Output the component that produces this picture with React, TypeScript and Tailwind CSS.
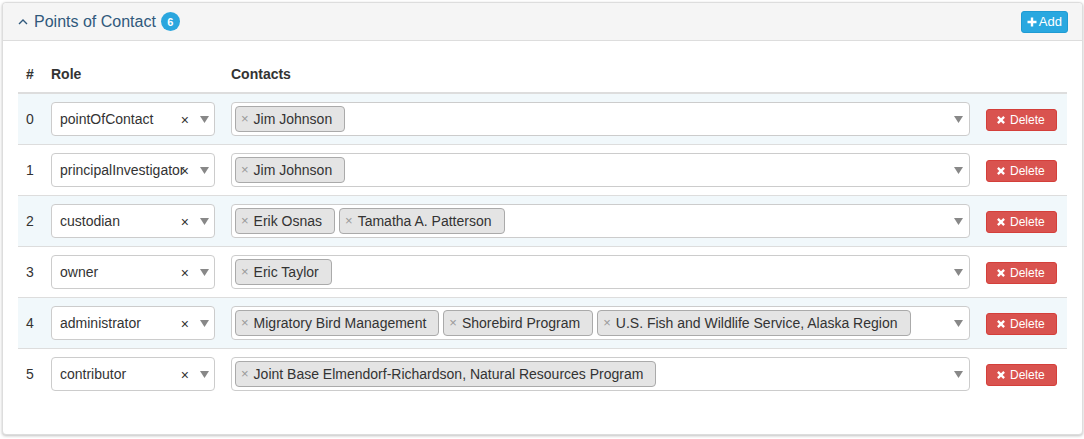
import React from 'react';

type Row = { role: string; contacts: string[] };

const rows: Row[] = [
  { role: 'pointOfContact', contacts: ['Jim Johnson'] },
  { role: 'principalInvestigator', contacts: ['Jim Johnson'] },
  { role: 'custodian', contacts: ['Erik Osnas', 'Tamatha A. Patterson'] },
  { role: 'owner', contacts: ['Eric Taylor'] },
  {
    role: 'administrator',
    contacts: ['Migratory Bird Management', 'Shorebird Program', 'U.S. Fish and Wildlife Service, Alaska Region'],
  },
  { role: 'contributor', contacts: ['Joint Base Elmendorf-Richardson, Natural Resources Program'] },
];

// small grey triangle used by the select widgets
const Arrow = () => (
  <svg width="9" height="7" viewBox="0 0 9 7" className="shrink-0">
    <path d="M0 0 H9 L4.5 7 Z" fill="#888" />
  </svg>
);

const Tag: React.FC<{ label: string }> = ({ label }) => (
  <span className="flex h-[26px] items-center rounded-[4px] border border-[#aaa] bg-[#e4e4e4] pl-[5px] pr-[12px] text-[#333] whitespace-nowrap">
    <span className="mr-[5px] text-[13px] text-[#999]">×</span>
    {label}
  </span>
);

const App: React.FC = () => {
  return (
    <div className="bg-white pl-[2px] pr-px pt-[2px] pb-[3px] font-['Liberation_Sans',Arial,sans-serif] text-[14px] leading-[20px] text-[#333]">
      <div className="rounded-[4px] border border-[#ddd] bg-white shadow-[0_1px_3px_rgba(0,0,0,0.25)]">
        {/* Header */}
        <div className="flex h-[38px] items-center justify-between rounded-t-[4px] border-b border-[#ddd] bg-[#f5f5f5] pl-[15px] pr-[14px]">
          <div className="flex items-center text-[#30597c]">
            <svg width="10" height="7" viewBox="0 0 10 7" className="mr-[6px]">
              <path d="M1 6 L5 2 L9 6" stroke="#30597c" strokeWidth="1.4" fill="none" />
            </svg>
            <span className="text-[16px]">Points of Contact</span>
            <span className="ml-[5px] flex h-[19px] w-[19px] items-center justify-center rounded-full bg-[#2aa6de] text-[11px] font-bold text-white">
              6
            </span>
          </div>
          <button className="flex h-[22px] items-center gap-[2px] rounded-[3px] border border-[#1f9bd3] bg-[#29a8e0] px-[5px] text-[13px] text-white">
            <svg width="10" height="10" viewBox="0 0 10 10">
              <path d="M5 0.5 V9.5 M0.5 5 H9.5" stroke="white" strokeWidth="2.4" />
            </svg>
            Add
          </button>
        </div>

        {/* Body */}
        <div className="px-[15px] pt-[15px] pb-[15px]">
          <table className="mb-[20px] w-[1049px] table-fixed border-collapse">
            <colgroup>
              <col className="w-[25px]" />
              <col className="w-[180px]" />
              <col className="w-[755px]" />
              <col className="w-[89px]" />
            </colgroup>
            <thead>
              <tr className="border-b-2 border-[#ddd]">
                <th className="p-[8px] text-left font-bold">#</th>
                <th className="p-[8px] text-left font-bold">Role</th>
                <th className="p-[8px] text-left font-bold">Contacts</th>
                <th className="p-[8px]"></th>
              </tr>
            </thead>
            <tbody>
              {rows.map((r, i) => (
                <tr key={i} className={`border-t border-[#ddd] ${i % 2 === 0 ? 'bg-[#f1f8fb]' : 'bg-white'}`}>
                  <td className="p-[8px] align-middle">{i}</td>
                  <td className="p-[8px] align-middle">
                    <div className="relative flex h-[34px] items-center rounded-[4px] border border-[#ccc] bg-white pl-[8px]">
                      <span className="whitespace-nowrap">{r.role}</span>
                      <span className="absolute right-[25px] top-[7px] text-[14px] text-[#333]">×</span>
                      <span className="absolute right-[5px] top-[13px]">
                        <Arrow />
                      </span>
                    </div>
                  </td>
                  <td className="p-[8px] align-middle">
                    <div className="flex h-[34px] items-center gap-[4px] rounded-[4px] border border-[#ccc] bg-white pl-[3px] pr-[6px]">
                      {r.contacts.map((c) => (
                        <Tag key={c} label={c} />
                      ))}
                      <span className="ml-auto">
                        <Arrow />
                      </span>
                    </div>
                  </td>
                  <td className="p-[8px] pt-[9px] align-middle">
                    <button className="flex h-[22px] items-center gap-[5px] rounded-[3px] border border-[#d43f3a] bg-[#d9534f] pl-[10px] pr-[11px] text-[12px] text-white">
                      <svg width="8" height="8" viewBox="0 0 9 9">
                        <path d="M1 1 L8 8 M8 1 L1 8" stroke="white" strokeWidth="2.6" />
                      </svg>
                      Delete
                    </button>
                  </td>
                </tr>
              ))}
            </tbody>
          </table>
        </div>
      </div>
    </div>
  );
};

export default App;
